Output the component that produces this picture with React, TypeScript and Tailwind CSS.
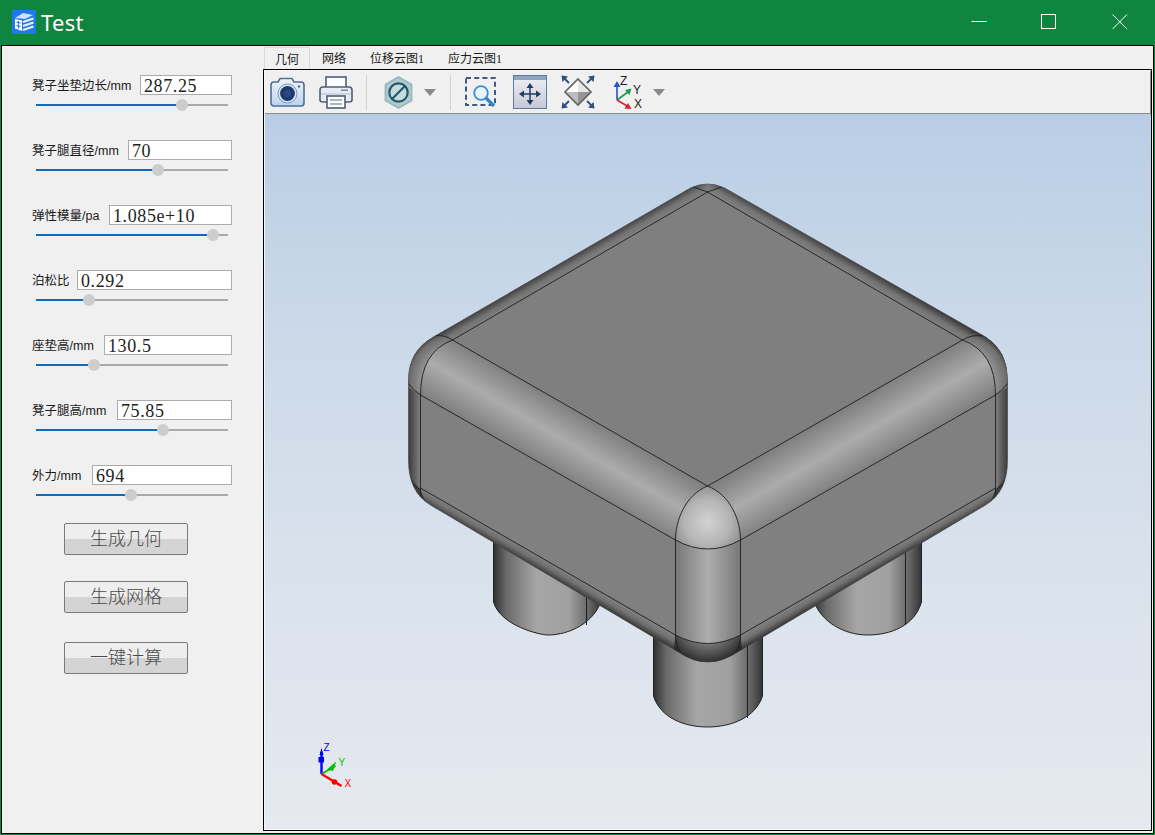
const sans = { fontFamily: '"Liberation Sans", "Noto Sans CJK SC", sans-serif' };
const serif = { fontFamily: '"Liberation Serif", "Noto Sans CJK SC", serif' };

// thumb = centre of the slider handle, track runs 36..228
const params = [
  { label: "凳子坐垫边长/mm", value: "287.25", width: "w-[92px]", thumb: 146 },
  { label: "凳子腿直径/mm", value: "70", width: "w-[104px]", thumb: 122 },
  { label: "弹性模量/pa", value: "1.085e+10", width: "w-[123px]", thumb: 177 },
  { label: "泊松比", value: "0.292", width: "w-[155px]", thumb: 53 },
  { label: "座垫高/mm", value: "130.5", width: "w-[128px]", thumb: 58 },
  { label: "凳子腿高/mm", value: "75.85", width: "w-[115px]", thumb: 127 },
  { label: "外力/mm", value: "694", width: "w-[140px]", thumb: 95 },
];

const tabs = [
  { label: "几何", className: "w-[46px] mt-[1px] border border-b-0 border-[#d9d9d9]" },
  { label: "网络", className: "w-[48px]" },
  { label: "位移云图1", className: "w-[78px]" },
  { label: "应力云图1", className: "w-[78px]" },
];

const AppLogo = () => (
  <svg width="24" height="24" viewBox="0 0 24 24">
    <rect width="24" height="24" fill="#1f7ae8" />
    <path d="M3 8 L11 3 L21 5 L13 9 Z" fill="#cfe0f8" />
    <path d="M3 9 L10 10.5 V21 L3 18.5 Z" fill="#ffffff" />
    <path d="M4.5 12 L8.5 13 M4.5 15.5 L8.5 16.5 M6.5 11 V18.5" stroke="#1f7ae8" strokeWidth="1.1" />
    <path d="M11 12 L21.5 8.5 M11 16 L21.5 12.5 M11 20 L21.5 16.5" stroke="#eef4fd" strokeWidth="2.2" />
  </svg>
);

const WindowControls = () => (
  <div className="ml-auto flex items-center">
    <svg width="16" height="16" viewBox="0 0 16 16" className="mr-[54px]">
      <path d="M0.5 7.5 H15.5" stroke="#fff" />
    </svg>
    <svg width="16" height="16" viewBox="0 0 16 16" className="mr-[55px]">
      <rect x="0.5" y="0.5" width="14" height="14" fill="none" stroke="#fff" />
    </svg>
    <svg width="16" height="16" viewBox="0 0 16 16" className="mr-[27px]">
      <path d="M0.5 0.5 L15 15 M15 0.5 L0.5 15" stroke="#fff" />
    </svg>
  </div>
);

const ParamRow = ({ label, value, width, thumb }: (typeof params)[number]) => (
  <div>
    <div className="flex h-[20px] items-center justify-between">
      <span className="pt-[2px] text-[12.5px] leading-none whitespace-nowrap text-[#1a1a1a]" style={sans}>
        {label}
      </span>
      <div
        className={`${width} flex h-[20px] items-center border border-[#ababab] bg-white pt-[2px] pl-[3px] text-[18px] tracking-[0.6px] text-[#222]`}
        style={serif}
      >
        {value}
      </div>
    </div>
    <div className="relative mx-[4px] mt-[9px] h-[2px] bg-[#aaaaaa]">
      <div className="h-full bg-[#0f6cbd]" style={{ width: thumb }} />
      <div
        className="absolute top-[-5px] ml-[-6px] h-[12px] w-[12px] rounded-full bg-[#cdcdcd]"
        style={{ left: thumb }}
      />
    </div>
  </div>
);

const ActionButton = ({ label, className }: { label: string; className: string }) => (
  <div
    className={`${className} flex h-[32px] w-[124px] items-center justify-center rounded-[2px] border border-[#7a7a7a] bg-[linear-gradient(to_bottom,#eeeeee_50%,#d4d4d4_50%)] text-[18px] font-light text-[#4a4a4a]`}
    style={sans}
  >
    {label}
  </div>
);

const Caret = ({ className }: { className: string }) => (
  <svg width="12" height="7" viewBox="0 0 12 7" className={className}>
    <path d="M0 0 H12 L6 7 Z" fill="#8a8a8a" />
  </svg>
);

const Separator = ({ className }: { className: string }) => (
  <div className={`${className} h-[35px] w-[1px] bg-[#d2d2d2]`} />
);

const CameraIcon = () => (
  <svg width="35" height="31" viewBox="0 0 35 31" className="ml-[5px]">
    <defs>
      <linearGradient id="camBody" x1="0" y1="0" x2="0" y2="1">
        <stop offset="0" stopColor="#f0f4f9" />
        <stop offset="1" stopColor="#bcd2ec" />
      </linearGradient>
    </defs>
    <path d="M1 8 Q1 5 4 5 L8 5 L10 1.5 H22 L24 5 H31 Q34 5 34 8 V26 Q34 29 31 29 H4 Q1 29 1 26 Z" fill="url(#camBody)" stroke="#4f6f98" strokeWidth="1.6" />
    <circle cx="17.5" cy="16.5" r="9.5" fill="#d8e4f2" stroke="#7c99bb" />
    <circle cx="17.5" cy="16.5" r="7.4" fill="#1c3a6e" />
    <circle cx="17.5" cy="16.5" r="3.8" fill="#2a4880" />
    <circle cx="29" cy="9.5" r="1.2" fill="#4f6f98" />
  </svg>
);

const PrinterIcon = () => (
  <svg width="34" height="33" viewBox="0 0 34 33" className="ml-[14px]">
    <rect x="7" y="1" width="20" height="11" fill="#fff" stroke="#4c5f7a" strokeWidth="1.6" />
    <path d="M4 11 H30 Q33 11 33 14 V24 Q33 26 30 26 H4 Q1 26 1 24 V14 Q1 11 4 11 Z" fill="#e8ecf2" stroke="#4c5f7a" strokeWidth="1.6" />
    <path d="M2 18 H32" stroke="#b3bdcb" />
    <rect x="22" y="13.5" width="7" height="1.5" fill="#7d8da3" />
    <rect x="8" y="20" width="18" height="12" fill="#fff" stroke="#4c5f7a" strokeWidth="1.6" />
    <path d="M11 24 H23 M11 28 H23" stroke="#8c9bb0" strokeWidth="1.3" />
  </svg>
);

const ClipIcon = () => (
  <svg width="29" height="33" viewBox="0 0 29 33" className="ml-[17px]">
    <path d="M14.5 1 L27.5 8.5 V24.5 L14.5 32 L1.5 24.5 V8.5 Z" fill="#b4c9cc" stroke="#9ab7bb" strokeWidth="1.8" />
    <circle cx="14.5" cy="16.5" r="9.2" fill="#c9dadc" stroke="#1d5b6f" strokeWidth="2.2" />
    <path d="M8 23 L21 10" stroke="#1d5b6f" strokeWidth="2.2" />
  </svg>
);

const ZoomRegionIcon = () => (
  <svg width="33" height="31" viewBox="0 0 33 31" className="ml-[14px]">
    <rect x="1" y="1" width="29" height="27" fill="none" stroke="#3f5a80" strokeWidth="2" strokeDasharray="5 3.2" />
    <circle cx="16" cy="16" r="6.8" fill="#eaf3fb" stroke="#3e90d4" strokeWidth="1.8" />
    <path d="M21 21 L29 29" stroke="#2c86cf" strokeWidth="3.2" />
  </svg>
);

const FitIcon = () => (
  <svg width="34" height="34" viewBox="0 0 34 34" className="ml-[15px]">
    <defs>
      <linearGradient id="fitBody" x1="0" y1="0" x2="0" y2="1">
        <stop offset="0" stopColor="#f0f1f5" />
        <stop offset="1" stopColor="#c5c9d6" />
      </linearGradient>
    </defs>
    <rect x="0.5" y="0.5" width="33" height="33" fill="url(#fitBody)" stroke="#5f7a9c" />
    <rect x="1" y="1" width="32" height="4" fill="#8fa6c2" />
    <path d="M17 11 V27 M9 19 H25" stroke="#1f3d66" strokeWidth="1.5" />
    <path d="M17 8 L20.5 13 H13.5 Z M17 30 L20.5 25 H13.5 Z M6 19 L11 15.5 V22.5 Z M28 19 L23 15.5 V22.5 Z" fill="#1f3d66" />
  </svg>
);

const IsoIcon = () => (
  <svg width="34" height="34" viewBox="0 0 34 34" className="ml-[14px]">
    <path d="M17 4 V17 H4 Z" fill="#ffffff" />
    <path d="M17 4 V17 H30 Z" fill="#e6e6e6" />
    <path d="M4 17 H17 V30 Z" fill="#bdbdbd" />
    <path d="M30 17 H17 V30 Z" fill="#969696" />
    <path d="M17 4 L30 17 L17 30 L4 17 Z" fill="none" stroke="#666" strokeWidth="1.7" />
    <path d="M0.5 0.5 L7 1.5 L1.5 7 Z M33.5 0.5 L27 1.5 L32.5 7 Z M0.5 33.5 L7 32.5 L1.5 27 Z M33.5 33.5 L27 32.5 L32.5 27 Z" fill="#2c5080" />
    <path d="M3 3 L8 8 M31 3 L26 8 M3 31 L8 26 M31 31 L26 26" stroke="#2c5080" strokeWidth="1.8" />
  </svg>
);

const AxisIcon = () => (
  <svg width="32" height="37" viewBox="0 0 32 37" className="ml-[18px]">
    <path d="M4 26 V10" stroke="#2255c8" strokeWidth="1.6" />
    <path d="M4 7 L7.5 13 H0.5 Z" fill="#2255c8" />
    <path d="M4 26 L15 18" stroke="#1f9a4a" strokeWidth="1.6" />
    <path d="M18.5 14.5 L16.5 21 L12 16 Z" fill="#1f9a4a" />
    <path d="M4 26 L15 32.5" stroke="#d8222a" strokeWidth="1.6" />
    <path d="M18.5 35 L11.5 34.5 L15 29 Z" fill="#d8222a" />
    <text x="7" y="11" fontSize="12" fill="#222" style={sans}>Z</text>
    <text x="20" y="20" fontSize="12" fill="#222" style={sans}>Y</text>
    <text x="21" y="34" fontSize="12" fill="#222" style={sans}>X</text>
  </svg>
);

const SILHOUETTE =
  "M690 188 Q707 180 724 188 L985 337 Q1007 351 1007 380 V460 Q1007 492 985 505 L737 652 Q707 672 678 652 L430 505 Q408 492 408 460 V380 Q408 351 433 337 Z";

const ModelView = () => (
  <svg viewBox="265 114 885 715" className="block h-full w-full">
    <defs>
      <linearGradient id="leg" x1="0" y1="0" x2="1" y2="0">
        <stop offset="0" stopColor="#303030" />
        <stop offset="0.12" stopColor="#6a6a6a" />
        <stop offset="0.4" stopColor="#a6a6a6" />
        <stop offset="0.7" stopColor="#a0a0a0" />
        <stop offset="0.9" stopColor="#606060" />
        <stop offset="1" stopColor="#333333" />
      </linearGradient>
      <linearGradient id="filletL" gradientUnits="userSpaceOnUse" x1="580" y1="413" x2="548" y2="468">
        <stop offset="0" stopColor="#7f7f7f" />
        <stop offset="0.5" stopColor="#acacac" />
        <stop offset="1" stopColor="#808080" />
      </linearGradient>
      <linearGradient id="filletR" gradientUnits="userSpaceOnUse" x1="835" y1="413" x2="867" y2="468">
        <stop offset="0" stopColor="#7f7f7f" />
        <stop offset="0.5" stopColor="#acacac" />
        <stop offset="1" stopColor="#808080" />
      </linearGradient>
      <linearGradient id="backL" gradientUnits="userSpaceOnUse" x1="580" y1="266" x2="573" y2="254">
        <stop offset="0" stopColor="#808080" />
        <stop offset="0.4" stopColor="#747474" />
        <stop offset="1" stopColor="#3a3a3a" />
      </linearGradient>
      <linearGradient id="backR" gradientUnits="userSpaceOnUse" x1="835" y1="266" x2="842" y2="254">
        <stop offset="0" stopColor="#808080" />
        <stop offset="0.4" stopColor="#747474" />
        <stop offset="1" stopColor="#3a3a3a" />
      </linearGradient>
      <linearGradient id="underL" gradientUnits="userSpaceOnUse" x1="550" y1="563" x2="543" y2="575">
        <stop offset="0" stopColor="#808080" />
        <stop offset="0.4" stopColor="#707070" />
        <stop offset="1" stopColor="#282828" />
      </linearGradient>
      <linearGradient id="underR" gradientUnits="userSpaceOnUse" x1="865" y1="563" x2="872" y2="575">
        <stop offset="0" stopColor="#808080" />
        <stop offset="0.4" stopColor="#707070" />
        <stop offset="1" stopColor="#282828" />
      </linearGradient>
      <linearGradient id="sideL" gradientUnits="userSpaceOnUse" x1="408" y1="0" x2="420" y2="0">
        <stop offset="0" stopColor="#3c3c3c" />
        <stop offset="1" stopColor="#808080" />
      </linearGradient>
      <linearGradient id="sideR" gradientUnits="userSpaceOnUse" x1="1007" y1="0" x2="995" y2="0">
        <stop offset="0" stopColor="#3c3c3c" />
        <stop offset="1" stopColor="#808080" />
      </linearGradient>
      <linearGradient id="post" gradientUnits="userSpaceOnUse" x1="675" y1="0" x2="740" y2="0">
        <stop offset="0" stopColor="#777777" />
        <stop offset="0.5" stopColor="#aeaeae" />
        <stop offset="1" stopColor="#777777" />
      </linearGradient>
      <radialGradient id="capFront" gradientUnits="userSpaceOnUse" cx="707" cy="522" r="42">
        <stop offset="0" stopColor="#d2d2d2" />
        <stop offset="0.55" stopColor="#b4b4b4" />
        <stop offset="1" stopColor="#808080" />
      </radialGradient>
      <radialGradient id="capLeft" gradientUnits="userSpaceOnUse" cx="456" cy="382" r="52">
        <stop offset="0" stopColor="#acacac" />
        <stop offset="0.7" stopColor="#8e8e8e" />
        <stop offset="0.9" stopColor="#6e6e6e" />
        <stop offset="1" stopColor="#3c3c3c" />
      </radialGradient>
      <radialGradient id="capRight" gradientUnits="userSpaceOnUse" cx="959" cy="382" r="52">
        <stop offset="0" stopColor="#acacac" />
        <stop offset="0.7" stopColor="#8e8e8e" />
        <stop offset="0.9" stopColor="#6e6e6e" />
        <stop offset="1" stopColor="#3c3c3c" />
      </radialGradient>
      <radialGradient id="capBottom" gradientUnits="userSpaceOnUse" cx="707" cy="622" r="42">
        <stop offset="0" stopColor="#8e8e8e" />
        <stop offset="0.5" stopColor="#7a7a7a" />
        <stop offset="1" stopColor="#2a2a2a" />
      </radialGradient>
      <clipPath id="seat">
        <path d={SILHOUETTE} />
      </clipPath>
    </defs>

    {/* legs */}
    <path d="M493 540 V602 C500 626 540 635 547 635 C570 635 594 622 601 600 V540 Z" fill="url(#leg)" stroke="#222" />
    <path d="M813 540 V600 C820 622 844 635 867 635 C890 635 914 626 921 602 V540 Z" fill="url(#leg)" stroke="#222" />
    <path d="M653 620 V696 C660 718 684 727 707 727 C730 727 755 718 762 696 V620 Z" fill="url(#leg)" stroke="#222" />
    <path d="M586 540 V625 M905 540 V625 M747 620 V718" stroke="#1e1e1e" fill="none" />

    {/* seat */}
    <path d={SILHOUETTE} fill="#808080" stroke="#3a3a3a" strokeWidth="0.6" />
    <g clipPath="url(#seat)">
      <rect x="405" y="330" width="60" height="190" fill="url(#sideL)" />
      <rect x="950" y="330" width="60" height="190" fill="url(#sideR)" />
      <path d="M404 330 H455 L420 395 L404 385 Z" fill="url(#capLeft)" />
      <path d="M1011 330 H960 L995 395 L1011 385 Z" fill="url(#capRight)" />
      <path d="M420 395 Q420 352 452 340 L433 325 L402 345 V383 Z" fill="url(#capLeft)" />
      <path d="M995 395 Q995 352 962 340 L982 325 L1013 345 V383 Z" fill="url(#capRight)" />
      <path d="M420 488 V510 L460 540 L660 660 L707 680 V620 L675 635 Z" fill="url(#underL)" />
      <path d="M995 488 V510 L955 540 L755 660 L707 680 V620 L740 635 Z" fill="url(#underR)" />
      <path d="M404 470 L420 490 L430 512 L404 500 Z" fill="#404040" />
      <path d="M1011 470 L995 490 L985 512 L1011 500 Z" fill="#404040" />
      <path d="M452 340 L707 192 V170 L433 320 Z" fill="url(#backL)" />
      <path d="M962 340 L707 192 V170 L982 320 Z" fill="url(#backR)" />
      <path d="M707 192 L962 340 L707 486 L452 340 Z" fill="#7f7f7f" />
      <path d="M420 395 L675 540 V635 L420 488 Z" fill="#808080" />
      <path d="M995 395 L740 540 V635 L995 488 Z" fill="#808080" />
      <path d="M452 340 L707 486 L675 540 L420 395 Q420 352 452 340 Z" fill="url(#filletL)" />
      <path d="M962 340 L707 486 L740 540 L995 395 Q995 352 962 340 Z" fill="url(#filletR)" />
      <path d="M675 635 Q707 652 740 635 L745 675 H670 Z" fill="url(#capBottom)" />
      <path d="M675 540 Q707 558 740 540 V635 Q707 652 675 635 Z" fill="url(#post)" />
      <path d="M707 486 C685 495 675 520 675 540 Q707 558 740 540 C740 520 730 495 707 486 Z" fill="url(#capFront)" />

      {/* edge lines */}
      <g fill="none" stroke="#1e1e1e" strokeWidth="0.9">
        <path d="M707 192 L962 340 L707 486 L452 340 Z" />
        <path d="M420 395 L675 540 M420 488 L675 635 M995 395 L740 540 M995 488 L740 635" />
        <path d="M433 336 Q443 334 452 340 Q420 352 420 395 V490 Q420 500 425 506 M407 382 Q412 390 420 395 M407 478 Q412 485 420 490" />
        <path d="M982 336 Q972 334 962 340 Q995 352 995 395 V490 Q995 500 990 506 M1008 382 Q1003 390 995 395 M1008 478 Q1003 485 995 490" />
        <path d="M707 486 C685 495 675 520 675 540 V635 Q675 645 680 652 M707 486 C730 495 740 520 740 540 V635 Q740 645 735 652" />
        <path d="M675 540 Q707 558 740 540 M675 635 Q707 652 740 635" />
        <path d="M693 187 L707 192 L721 187" />
      </g>
    </g>

    {/* orientation triad */}
    <path d="M321 774 V752" stroke="#0000ff" strokeWidth="2.4" />
    <path d="M321 748 L323 755 H319 Z" fill="#0000ff" />
    <rect x="318" y="757" width="5.5" height="5.5" fill="#0000ff" />
    <path d="M321 774 L335 766" stroke="#00c000" strokeWidth="2" />
    <path d="M328 769 L334 764 L332 770 Z" fill="#00c000" stroke="#00c000" strokeWidth="1.6" />
    <path d="M321 774 L341 786" stroke="#ff0000" strokeWidth="2.4" />
    <circle cx="334" cy="782" r="2.8" fill="#ff0000" />
    <text x="323" y="751" fontSize="10" fill="#0000ff" style={sans}>Z</text>
    <text x="338" y="766" fontSize="10" fill="#00c000" style={sans}>Y</text>
    <text x="344" y="787" fontSize="10" fill="#ff0000" style={sans}>X</text>
  </svg>
);

export default function App() {
  return (
    <div className="flex h-[835px] w-[1155px] flex-col overflow-hidden bg-[#10853f]">
      <div className="flex h-[45px] shrink-0 items-center pb-[1px] pl-[12px]">
        <AppLogo />
        <span className="ml-[5px] text-[22px] tracking-[0.3px] text-white" style={{ fontFamily: '"Noto Sans", sans-serif' }}>
          Test
        </span>
        <WindowControls />
      </div>

      <div className="mx-[1px] mb-[1px] flex min-h-0 flex-1 border border-black bg-[#f0f0f0]">
        <div className="flex w-[261px] shrink-0 flex-col pt-[29px] pr-[31px] pl-[30px]">
          <div className="flex flex-col gap-[34px]">
            {params.map((p) => (
              <ParamRow key={p.label} {...p} />
            ))}
          </div>
          <div className="mt-[27px] ml-[32px] flex flex-col">
            <ActionButton label="生成几何" className="" />
            <ActionButton label="生成网格" className="mt-[26px]" />
            <ActionButton label="一键计算" className="mt-[29px]" />
          </div>
        </div>

        <div className="flex min-w-0 flex-1 flex-col pr-[1px] pb-[2px]">
          <div className="flex h-[23px] shrink-0 pl-[1px]">
            {tabs.map((t) => (
              <div
                key={t.label}
                className={`${t.className} flex items-center justify-center pt-[2px] text-[12px] text-[#1a1a1a]`}
                style={serif}
              >
                {t.label}
              </div>
            ))}
          </div>
          <div className="flex min-h-0 flex-1 flex-col border border-black bg-[#f5f5f5] p-[1px] pr-0">
            <div className="flex h-[43px] shrink-0 items-center border-r border-b border-r-[#8c8c8c] border-b-[#8c8c8c] bg-[#f0f0f0]">
              <CameraIcon />
              <PrinterIcon />
              <Separator className="ml-[13px]" />
              <ClipIcon />
              <Caret className="ml-[11px]" />
              <Separator className="ml-[14px]" />
              <ZoomRegionIcon />
              <FitIcon />
              <IsoIcon />
              <AxisIcon />
              <Caret className="ml-[8px]" />
            </div>
            <div className="min-h-0 flex-1 bg-[linear-gradient(to_bottom,#b9cee5_0%,#c8d7e8_25%,#d8e1ec_60%,#e6e9ef_100%)]">
              <ModelView />
            </div>
          </div>
        </div>
      </div>
    </div>
  );
}
